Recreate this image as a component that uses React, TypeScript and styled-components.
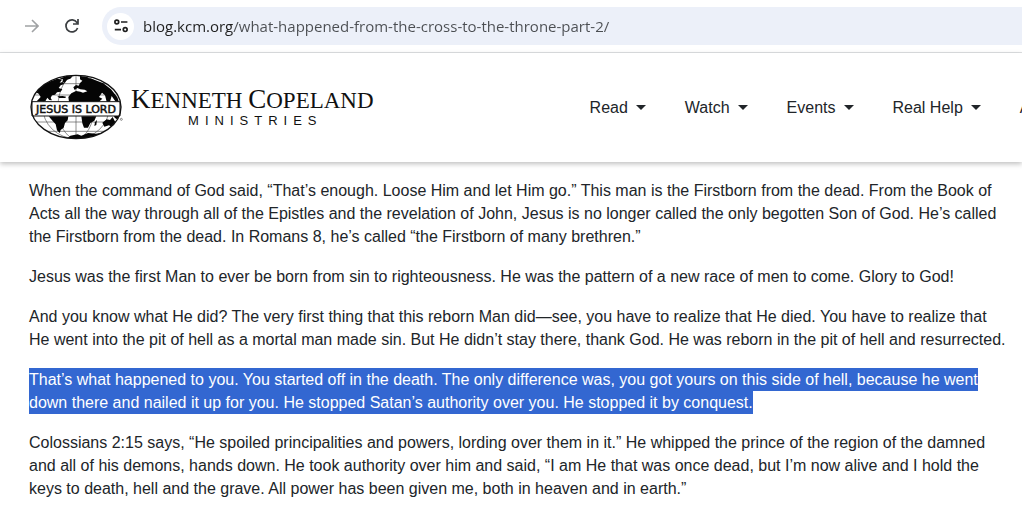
import React from "react";
import styled, { createGlobalStyle } from "styled-components";

const GlobalStyle = createGlobalStyle`
  *, *::before, *::after { box-sizing: border-box; }
  body {
    margin: 0;
    background: #fff;
    color: #212529;
    font-family: "Liberation Sans", Arial, sans-serif;
    font-size: 16px;
    overflow: hidden;
  }
`;

const BrowserBar = styled.div`
  display: flex;
  align-items: center;
  height: 53px;
  padding-left: 20px;
  border-bottom: 1px solid #dfe1e3;
`;

const IconButton = styled.button<{ $tone: string }>`
  display: flex;
  align-items: center;
  justify-content: center;
  width: 24px;
  height: 24px;
  margin-right: 16px;
  padding: 0;
  border: 0;
  background: none;
  color: ${(p) => p.$tone};
`;

const AddressBar = styled.label`
  display: flex;
  flex: 1;
  align-items: center;
  gap: 9px;
  height: 38px;
  margin-left: 2px;
  padding-left: 5px;
  border-radius: 19px 0 0 19px;
  background: #ecf0f9;
`;

const SiteInfo = styled.span`
  display: flex;
  flex: none;
  align-items: center;
  justify-content: center;
  width: 27px;
  height: 27px;
  border-radius: 50%;
  background: #fff;
  color: #1f1f1f;
`;

const AddressInput = styled.input`
  flex: 1;
  min-width: 0;
  height: 28px;
  padding: 0;
  border: 0;
  outline: 0;
  background: linear-gradient(to right, #1f1f1f 90px, #4b4e52 90px);
  background-clip: text;
  color: transparent;
  font: 15px/28px "Segoe UI", "Open Sans", "Noto Sans", sans-serif;
`;

const SiteHeader = styled.header`
  position: relative;
  display: flex;
  align-items: center;
  height: 109px;
  padding-left: 29px;
  background: #fff;
  box-shadow: 0 2px 5px rgba(0, 0, 0, 0.25);
`;

const Brand = styled.a`
  display: flex;
  flex: none;
  align-items: center;
  gap: 7px;
  color: #111;
  text-decoration: none;
`;

const BrandText = styled.span`
  display: flex;
  flex-direction: column;
  align-items: center;
`;

const BrandName = styled.span`
  font: 23px/24px "Liberation Serif", serif;
  white-space: nowrap;
`;

const Initial = styled.span`
  font-size: 27px;
`;

const BrandSub = styled.span`
  padding-left: 6px;
  font-size: 13px;
  line-height: 16px;
  letter-spacing: 6px;
`;

const Nav = styled.nav`
  display: flex;
  flex: 1;
  gap: 39px;
  min-width: 0;
  margin-left: 216px;
  overflow: hidden;
`;

const NavButton = styled.button`
  display: flex;
  flex: none;
  align-items: center;
  gap: 8px;
  padding: 0;
  border: 0;
  background: none;
  color: #212529;
  font: 16px/24px "Liberation Sans", Arial, sans-serif;

  &::after {
    content: "";
    border: 5px solid transparent;
    border-top-color: #212529;
    border-bottom: 0;
  }
`;

const Article = styled.main`
  padding: 17px 14px 0 29px;
`;

const Paragraph = styled.p`
  margin: 0 0 17px;
  line-height: 23px;
`;

const Selected = styled.mark`
  padding: 3px 0;
  background: #3367d1;
  color: #fff;
`;

const menu = ["Read", "Watch", "Events", "Real Help", "About"];

function Globe() {
  return (
    <svg width="95" height="67" viewBox="27 27 285 201" role="img" aria-label="Jesus is Lord globe">
      <defs>
        <clipPath id="globe">
          <ellipse cx="168" cy="126" rx="135" ry="95" />
        </clipPath>
      </defs>
      <ellipse cx="168" cy="126" rx="135" ry="95" fill="#fff" />
      <g clipPath="url(#globe)">
        <g fill="none" stroke="#555" strokeWidth="2">
          <path d="M168 30V222M60 56H276M30 90H306M30 171H306M60 199H276" />
          <ellipse cx="168" cy="126" rx="54" ry="95" />
          <ellipse cx="168" cy="126" rx="100" ry="95" />
        </g>
        <g fill="#050505">
          <path d="M48 82L68 61L92 49L112 41L126 44L119 53L128 51L133 57L122 61L116 69L127 73L122 80L111 82L105 89L96 91L92 99L96 106L88 105L82 98L76 109H50L62 96L56 86Z" />
          <path d="M118 42L139 33L158 34L151 41L141 44L134 54L127 51L129 43Z" />
          <path d="M112 94L128 93L138 95L136 99H118Z" />
          <path d="M160 67L168 60L176 62L180 54L192 43L188 35L215 41L250 55L273 73L292 97L302 126L294 112L286 109L275 93L270 110H260L255 91L246 83L237 96L247 101L237 110H147L145 96L154 85L168 78L181 80L189 83L202 79L194 74L181 73L172 69L164 75Z" />
          <path d="M180 33L204 37L200 44L188 48L180 43Z" />
          <path d="M86 154L145 154L143 166L135 174L131 188L122 195L119 204L111 196L107 178L98 168Z" />
          <path d="M184 154H229L223 167L211 174L204 188H192L187 175Z" />
          <path d="M225 172L231 164L229 180L223 183Z" />
          <path d="M247 173L260 163L270 165L278 156L286 172L276 187L267 181L253 185Z" />
          <path d="M281 151H300L293 164L284 158Z" />
          <path d="M142 220L151 212L173 208L184 212L204 204L228 206L247 203L225 217L168 225Z" />
        </g>
      </g>
      <path d="M36 110H300V153H36Z" fill="#fff" stroke="#111" strokeWidth="3" />
      <ellipse cx="168" cy="126" rx="135" ry="95" fill="none" stroke="#111" strokeWidth="4" />
      <text
        x="168"
        y="143"
        textAnchor="middle"
        fontFamily="DejaVu Sans, sans-serif"
        fontSize="33"
        fill="#111"
        stroke="#111"
        strokeWidth="1.5"
      >
        JESUS IS LORD
      </text>
      <circle cx="304" cy="163" r="3" fill="none" stroke="#555" strokeWidth="2" />
    </svg>
  );
}

export default function App() {
  return (
    <>
      <GlobalStyle />
      <BrowserBar>
        <IconButton $tone="#a0a2a4" aria-label="Forward">
          <svg width="14" height="14" viewBox="0 0 14 14" fill="none" stroke="currentColor" strokeWidth="1.6">
            <path d="M0 7H13M7 1L13 7L7 13" />
          </svg>
        </IconButton>
        <IconButton $tone="#3c3f42" aria-label="Reload">
          <svg width="16" height="16" viewBox="0 0 16 16" fill="none" stroke="currentColor" strokeWidth="1.7">
            <path d="M13.6 10A6 6 0 1 1 13 4.6L14 6M14 1V6H9" />
          </svg>
        </IconButton>
        <AddressBar>
          <SiteInfo>
            <svg width="14" height="14" viewBox="0 0 14 14" fill="none" stroke="currentColor" strokeWidth="1.7">
              <circle cx="2.8" cy="3" r="1.9" />
              <path d="M7 3H13.4M.8 10.6H7" />
              <circle cx="11.2" cy="10.6" r="1.9" />
            </svg>
          </SiteInfo>
          <AddressInput
            aria-label="Address"
            spellCheck={false}
            defaultValue="blog.kcm.org/what-happened-from-the-cross-to-the-throne-part-2/"
          />
        </AddressBar>
      </BrowserBar>
      <SiteHeader>
        <Brand href="#">
          <Globe />
          <BrandText>
            <BrandName>
              <Initial>K</Initial>ENNETH <Initial>C</Initial>OPELAND
            </BrandName>
            <BrandSub>MINISTRIES</BrandSub>
          </BrandText>
        </Brand>
        <Nav>
          {menu.map((item) => (
            <NavButton key={item}>{item}</NavButton>
          ))}
        </Nav>
      </SiteHeader>
      <Article>
        <Paragraph>
          When the command of God said, “That’s enough. Loose Him and let Him go.” This man is the Firstborn from the
          dead. From the Book of Acts all the way through all of the Epistles and the revelation of John, Jesus is no
          longer called the only begotten Son of God. He’s called the Firstborn from the dead. In Romans 8, he’s called
          “the Firstborn of many brethren.”
        </Paragraph>
        <Paragraph>
          Jesus was the first Man to ever be born from sin to righteousness. He was the pattern of a new race of men to
          come. Glory to God!
        </Paragraph>
        <Paragraph>
          And you know what He did? The very first thing that this reborn Man did—see, you have to realize that He died.
          You have to realize that He went into the pit of hell as a mortal man made sin. But He didn’t stay there,
          thank God. He was reborn in the pit of hell and resurrected.
        </Paragraph>
        <Paragraph>
          <Selected>
            That’s what happened to you. You started off in the death. The only difference was, you got yours on this
            side of hell, because he went down there and nailed it up for you. He stopped Satan’s authority over you. He
            stopped it by conquest.
          </Selected>
        </Paragraph>
        <Paragraph>
          Colossians 2:15 says, “He spoiled principalities and powers, lording over them in it.” He whipped the prince
          of the region of the damned and all of his demons, hands down. He took authority over him and said, “I am He
          that was once dead, but I’m now alive and I hold the keys to death, hell and the grave. All power has been
          given me, both in heaven and in earth.”
        </Paragraph>
      </Article>
    </>
  );
}
